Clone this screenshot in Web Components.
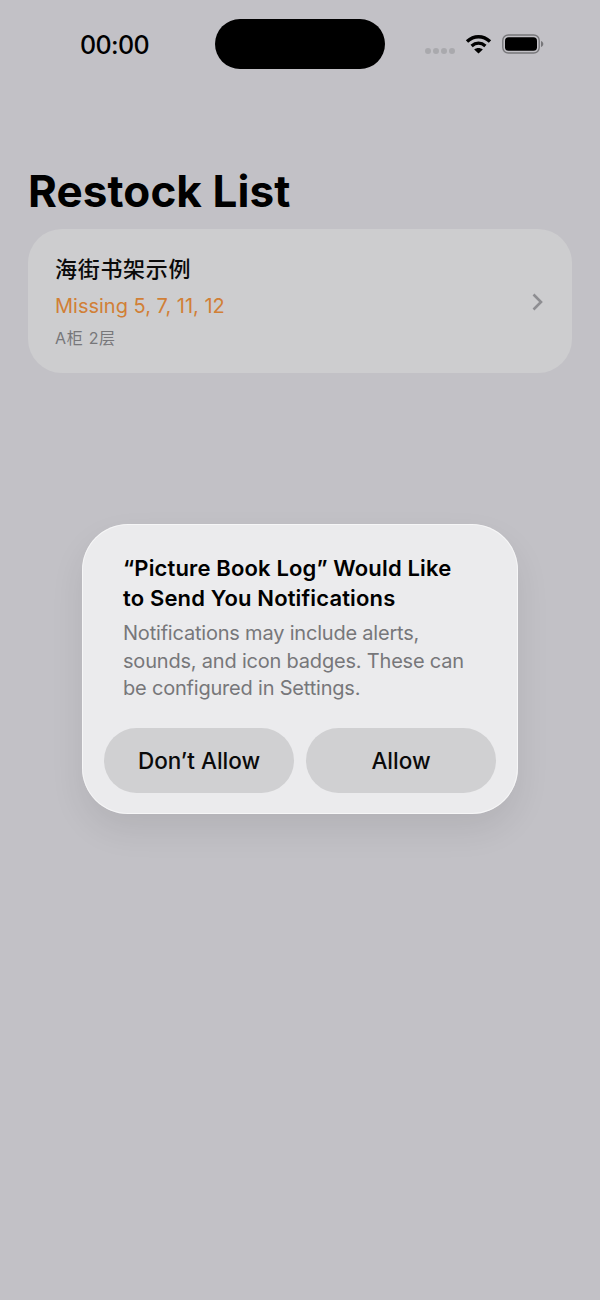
<!DOCTYPE html>
<html lang="en">
<head>
<meta charset="utf-8">
<title>Restock List</title>
<style>
  html, body { margin: 0; height: 100%; }
  body {
    width: 600px;
    height: 1300px;
    overflow: hidden;
    background: #c2c1c6;
    font-family: Inter, "Noto Sans CJK SC", sans-serif;
    color: #000;
  }
</style>
</head>
<body>
<status-bar></status-bar>
<page-title>Restock List</page-title>
<restock-row>
  <span slot="name">海街书架示例</span>
  <span slot="missing">Missing 5, 7, 11, 12</span>
  <span slot="place">A柜 2层</span>
</restock-row>
<alert-dialog>
  <span slot="title">“Picture Book Log” Would Like to Send You Notifications</span>
  <span slot="message">Notifications may include alerts, sounds, and icon badges. These can be configured in Settings.</span>
  <alert-button>Don’t Allow</alert-button>
  <alert-button>Allow</alert-button>
</alert-dialog>

<script>
// barra de estado
class StatusBar extends HTMLElement {
  constructor() {
    super();
    const shadow = this.attachShadow({ mode: 'open' });
    shadow.innerHTML = `
      <style>
        :host { display: block; height: 70px; padding-top: 19px; box-sizing: content-box; }
        .bar { display: grid; grid-template-columns: 215px 170px 1fr; grid-template-rows: 50px; }
        .time { font-size: 25px; font-weight: 500; line-height: 50px; padding-left: 80px; letter-spacing: -0.6px; transform: translateY(1px); }
        .island { background: #000; border-radius: 25px; }
        .icons { display: flex; align-items: center; padding-left: 40px; }
        .dots { display: flex; gap: 2px; margin-top: 13px; }
        .dots i { width: 6px; height: 6px; border-radius: 50%; background: #a9a9ad; }
        svg { display: block; }
        .wifi { margin-left: 10px; margin-bottom: 1px; }
        .batt { margin-left: 10px; margin-bottom: 1px; }
      </style>
      <div class="bar">
        <div class="time">00:00</div>
        <div class="island"></div>
        <div class="icons">
          <div class="dots"><i></i><i></i><i></i><i></i></div>
          <svg class="wifi" width="27" height="20" viewBox="0 0 27 20">
            <path d="M2 7.500C9 1.200 18 1.200 25 7.500" fill="none" stroke="#000" stroke-width="3.400"/>
            <path d="M6.600 12C10.800 8.400 16.200 8.400 20.400 12" fill="none" stroke="#000" stroke-width="3.400"/>
            <path d="M9.200 15.400C11.600 13.400 15.400 13.400 17.800 15.400L13.500 19.600Z" fill="#000"/>
          </svg>
          <svg class="batt" width="42" height="20" viewBox="0 0 42 20">
            <rect x="0.800" y="1" width="36.400" height="18" rx="5.500" fill="none" stroke="#77777a" stroke-width="1.400"/>
            <rect x="3" y="3.200" width="32" height="13.600" rx="3.600" fill="#000"/>
            <path d="M39 7v6c1.500-.5 2.300-1.600 2.300-3S40.500 7.500 39 7z" fill="#77777a"/>
          </svg>
        </div>
      </div>`;
  }
}

class PageTitle extends HTMLElement {
  constructor() {
    super();
    const shadow = this.attachShadow({ mode: 'open' });
    shadow.innerHTML = `
      <style>
        :host { display: block; padding: 72px 28px 0; font-size: 44px; font-weight: 700; line-height: 60px; letter-spacing: 0.1px; }
      </style>
      <slot></slot>`;
  }
}

class RestockRow extends HTMLElement {
  constructor() {
    super();
    const shadow = this.attachShadow({ mode: 'open' });
    shadow.innerHTML = `
      <style>
        :host {
          display: flex; align-items: center; justify-content: space-between;
          box-sizing: border-box; height: 144px; margin: 8px 28px 0; padding: 0 28px 0 27px;
          background: #cdcdcf; border-radius: 34px;
        }
        .text { display: flex; flex-direction: column; }
        .name { font-size: 22px; font-weight: 500; line-height: 30px; letter-spacing: 0.7px; color: #0a0a0a; }
        .missing { font-size: 20px; line-height: 28px; margin-top: 8px; color: #d17f36; }
        .place { font-size: 16px; line-height: 22px; margin-top: 7px; letter-spacing: 0.7px; color: #77777a; }
        svg { margin-top: 2px; }
      </style>
      <div class="text">
        <div class="name"><slot name="name"></slot></div>
        <div class="missing"><slot name="missing"></slot></div>
        <div class="place"><slot name="place"></slot></div>
      </div>
      <svg width="13" height="20" viewBox="0 0 13 20">
        <path d="M2.500 2.500L10 10L2.500 17.500" fill="none" stroke="#8e8e92" stroke-width="2.600"/>
      </svg>`;
  }
}

class AlertDialog extends HTMLElement {
  constructor() {
    super();
    const shadow = this.attachShadow({ mode: 'open' });
    shadow.innerHTML = `
      <style>
        :host { position: absolute; top: 524px; left: 82px; display: block; width: 436px; }
        .box {
          box-sizing: border-box; height: 290px; padding: 29px 22px 0;
          background: #ebebed; border-radius: 46px;
          box-shadow: 0 16px 34px rgba(0,0,0,.08), inset 0 0 0 1px rgba(255,255,255,.55);
        }
        .copy { padding: 0 19px; }
        .title { font-size: 22px; font-weight: 560; line-height: 30px; letter-spacing: 0.15px; color: #000; }
        .message { font-size: 20px; line-height: 27.500px; margin-top: 7px; letter-spacing: -0.2px; color: #77777a; }
        .actions { display: grid; grid-template-columns: 190px 190px; gap: 12px; margin-top: 25px; }
      </style>
      <div class="box">
        <div class="copy">
          <div class="title"><slot name="title"></slot></div>
          <div class="message"><slot name="message"></slot></div>
        </div>
        <div class="actions"><slot></slot></div>
      </div>`;
  }
}

class AlertButton extends HTMLElement {
  constructor() {
    super();
    const shadow = this.attachShadow({ mode: 'open' });
    shadow.innerHTML = `
      <style>
        :host {
          display: flex; align-items: center; justify-content: center;
          height: 65px; border-radius: 33px; background: #d0d0d2;
          font-size: 22.500px; font-weight: 450; color: #0a0a0a;
        }
      </style>
      <slot></slot>`;
  }
}

customElements.define('status-bar', StatusBar);
customElements.define('page-title', PageTitle);
customElements.define('restock-row', RestockRow);
customElements.define('alert-dialog', AlertDialog);
customElements.define('alert-button', AlertButton);
</script>
</body>
</html>
